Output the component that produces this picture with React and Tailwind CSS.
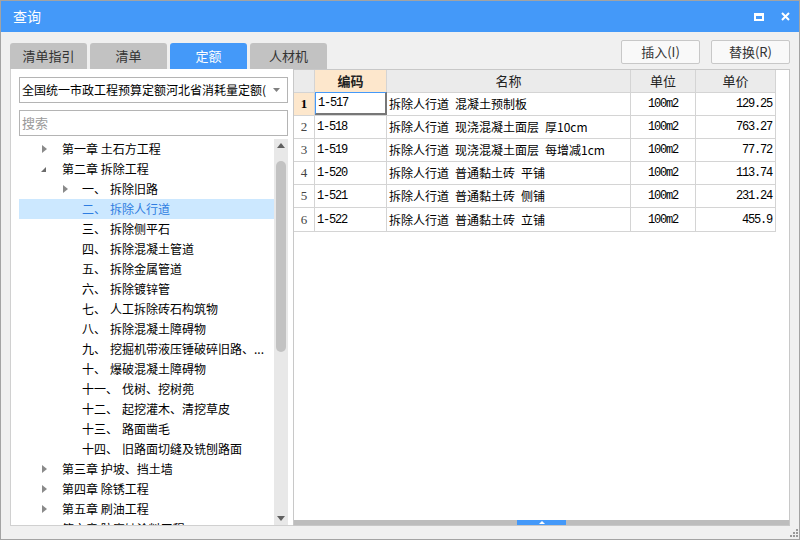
import React from "react";

const tree = [
  { lvl: 0, arrow: "right", label: "第一章 土石方工程" },
  { lvl: 0, arrow: "down", label: "第二章 拆除工程" },
  { lvl: 1, arrow: "right", num: "一、", label: "拆除旧路" },
  { lvl: 1, num: "二、", label: "拆除人行道", sel: true },
  { lvl: 1, num: "三、", label: "拆除侧平石" },
  { lvl: 1, num: "四、", label: "拆除混凝土管道" },
  { lvl: 1, num: "五、", label: "拆除金属管道" },
  { lvl: 1, num: "六、", label: "拆除镀锌管" },
  { lvl: 1, num: "七、", label: "人工拆除砖石构筑物" },
  { lvl: 1, num: "八、", label: "拆除混凝土障碍物" },
  { lvl: 1, num: "九、", label: "挖掘机带液压锤破碎旧路、..." },
  { lvl: 1, num: "十、", label: "爆破混凝土障碍物" },
  { lvl: 1, num: "十一、", label: "伐树、挖树蔸" },
  { lvl: 1, num: "十二、", label: "起挖灌木、清挖草皮" },
  { lvl: 1, num: "十三、", label: "路面凿毛" },
  { lvl: 1, num: "十四、", label: "旧路面切缝及铣刨路面" },
  { lvl: 0, arrow: "right", label: "第三章 护坡、挡土墙" },
  { lvl: 0, arrow: "right", label: "第四章 除锈工程" },
  { lvl: 0, arrow: "right", label: "第五章 刷油工程" },
  { lvl: 0, arrow: "right", label: "第六章 防腐蚀涂料工程" },
];

const rows = [
  { code: "1-517", name: "拆除人行道\u2002混凝土预制板", unit: "100m2", price: "129.25" },
  { code: "1-518", name: "拆除人行道\u2002现浇混凝土面层\u2002厚10cm", unit: "100m2", price: "763.27" },
  { code: "1-519", name: "拆除人行道\u2002现浇混凝土面层\u2002每增减1cm", unit: "100m2", price: "77.72" },
  { code: "1-520", name: "拆除人行道\u2002普通黏土砖\u2002平铺", unit: "100m2", price: "113.74" },
  { code: "1-521", name: "拆除人行道\u2002普通黏土砖\u2002侧铺", unit: "100m2", price: "231.24" },
  { code: "1-522", name: "拆除人行道\u2002普通黏土砖\u2002立铺", unit: "100m2", price: "455.9" },
];

const tabs = ["清单指引", "清单", "定额", "人材机"];

function Arrow({ dir }) {
  if (dir === "down") {
    return (
      <svg width="8" height="8" viewBox="0 0 8 8">
        <path d="M6 2 L6 7 L1 7 Z" fill="#6b6b6b" />
      </svg>
    );
  }
  return (
    <svg width="8" height="10" viewBox="0 0 8 10">
      <path d="M2 1 L7 5 L2 9 Z" fill="#8a8a8a" />
    </svg>
  );
}

const mono = "font-['Liberation_Mono','Noto_Sans_CJK_SC',monospace] tracking-[-1.2px]";

export default function App() {
  return (
    <div className="w-[800px] h-[540px] flex flex-col bg-[#f0f0f0] border border-[#a3a3a3] font-['Noto_Sans_CJK_SC','Noto_Sans',sans-serif] text-[12px] text-[#222] overflow-hidden">
      {/* title bar */}
      <div className="h-[31px] bg-[#4499f9] flex items-center justify-between pl-[12px] pr-[9px] shrink-0">
        <span className="text-white text-[14px]">查询</span>
        <div className="flex items-center gap-[17px]">
          <div className="w-[10px] h-[8px] border-2 border-t-[3px] border-white" />
          <svg width="9" height="9" viewBox="0 0 9 9">
            <path d="M1 1 L8 8 M8 1 L1 8" stroke="white" strokeWidth="2" />
          </svg>
        </div>
      </div>

      {/* tabs + buttons */}
      <div className="h-[37px] flex justify-between px-[9px] shrink-0">
        <div className="flex items-end gap-[3px]">
          {tabs.map((t) => (
            <div
              key={t}
              className={`w-[77px] h-[26px] rounded-t-[3px] flex items-center justify-center text-[13px] ${
                t === "定额" ? "bg-[#4499f9] text-white" : "bg-[#c2c2c2] text-[#333]"
              }`}
            >
              {t}
            </div>
          ))}
        </div>
        <div className="flex items-start gap-[11px] pt-[8px]">
          <button className="w-[79px] h-[24px] bg-[#f9f9f9] border border-[#c8c8c8] rounded-[2px] text-[13px] text-[#333]">
            插入(I)
          </button>
          <button className="w-[79px] h-[24px] bg-[#f9f9f9] border border-[#c8c8c8] rounded-[2px] text-[13px] text-[#333]">
            替换(R)
          </button>
        </div>
      </div>

      {/* main */}
      <div className="flex pl-[9px] pr-[9px] h-[457px] shrink-0">
        {/* left panel */}
        <div className="w-[283px] bg-white border-l border-b border-[#d0d0d0] flex flex-col pl-[8px] pr-[5px] pt-[8px]">
          <div className="h-[26px] border border-[#b4b4b4] flex items-center pl-[2px] pr-[7px] justify-between shrink-0">
            <span className="text-[12px] text-black whitespace-nowrap overflow-hidden">全国统一市政工程预算定额河北省消耗量定额(</span>
            <svg width="7" height="4" viewBox="0 0 7 4" className="shrink-0 ml-[6px]">
              <path d="M0 0 L7 0 L3.5 4 Z" fill="#808080" />
            </svg>
          </div>
          <div className="h-[26px] mt-[7px] border border-[#b4b4b4] flex items-center pl-[2px] shrink-0 text-[13px] text-[#9a9a9a]">
            搜索
          </div>
          <div className="flex flex-1 mt-[3px] min-h-0">
            <div className="flex-1 overflow-hidden">
              {tree.map((it, i) => (
                <div
                  key={i}
                  className={`h-[20px] flex items-center whitespace-nowrap text-[12px] ${
                    it.sel ? "bg-[#cce8ff] text-[#2f7de1]" : "text-black"
                  }`}
                >
                  {it.lvl === 0 ? (
                    <>
                      <div className="w-[43px] flex justify-end pr-[14px]">{it.arrow && <Arrow dir={it.arrow} />}</div>
                      <span>{it.label}</span>
                    </>
                  ) : (
                    <>
                      <div className="w-[63px] flex justify-end pr-[13px]">{it.arrow && <Arrow dir={it.arrow} />}</div>
                      <span>{it.num}</span>
                      <span className="ml-[4px]">{it.label}</span>
                    </>
                  )}
                </div>
              ))}
            </div>
            <div className="w-[14px] bg-[#e8e8e8] flex flex-col items-center">
              <svg width="8" height="5" viewBox="0 0 8 5" className="mt-[4px]">
                <path d="M0 5 L8 5 L4 0 Z" fill="#606060" />
              </svg>
              <div className="w-[10px] h-[191px] mt-[13px] bg-[#c2c2c2] rounded-[5px]" />
              <div className="flex-1" />
              <svg width="8" height="5" viewBox="0 0 8 5" className="mb-[4px]">
                <path d="M0 0 L8 0 L4 5 Z" fill="#606060" />
              </svg>
            </div>
          </div>
        </div>

        {/* right panel */}
        <div className="flex-1 bg-white border border-[#c8c8c8] flex flex-col">
          <div className="flex-1">
            <div className="w-[482px] border-r border-b border-[#d4d4d4]">
              <div className="flex h-[23px] bg-[#ebebeb] border-b border-[#d4d4d4] text-[13px] text-[#222]">
                <div className="w-[21px] border-r border-[#d4d4d4]" />
                <div className="w-[72px] border-r border-[#d4d4d4] bg-[#fde7cc] flex items-center justify-center font-bold">编码</div>
                <div className="w-[244px] border-r border-[#d4d4d4] flex items-center justify-center">名称</div>
                <div className="w-[65px] border-r border-[#d4d4d4] flex items-center justify-center">单位</div>
                <div className="flex-1 flex items-center justify-center">单价</div>
              </div>
              {rows.map((r, i) => (
                <div key={r.code} className={`flex h-[23px] text-black ${i < rows.length - 1 ? "border-b border-[#d4d4d4]" : ""}`}>
                  <div
                    className={`w-[21px] border-r border-[#d4d4d4] flex items-center justify-center font-['Liberation_Serif',serif] text-[13px] ${
                      i === 0 ? "bg-[#fde7cc] font-bold" : "text-[#444]"
                    }`}
                  >
                    {i + 1}
                  </div>
                  <div
                    className={`w-[72px] flex items-center pl-[2px] text-[12px] ${mono} ${
                      i === 0
                        ? "border-t border-l border-t-[#4499f9] border-l-[#4499f9] border-r-2 border-b-2 border-r-[#777] border-b-[#777] -mt-px"
                        : "border-r border-[#d4d4d4]"
                    }`}
                  >
                    {r.code}
                  </div>
                  <div className="w-[244px] border-r border-[#d4d4d4] flex items-center pl-[2px] text-[12px] whitespace-nowrap">
                    {r.name}
                  </div>
                  <div className={`w-[65px] border-r border-[#d4d4d4] flex items-center justify-center text-[12px] ${mono}`}>
                    {r.unit}
                  </div>
                  <div className={`flex-1 flex items-center justify-end pr-[3px] text-[12px] ${mono}`}>{r.price}</div>
                </div>
              ))}
            </div>
          </div>
          <div className="h-[5px] bg-[#bdbdbd] flex justify-center shrink-0">
            <div className="w-[49px] bg-[#4499f9] flex items-center justify-center">
              <svg width="6" height="3" viewBox="0 0 6 3">
                <path d="M0 3 L6 3 L3 0 Z" fill="white" />
              </svg>
            </div>
          </div>
        </div>
      </div>

      {/* status/resize */}
      <div className="flex-1 flex justify-end items-end pr-[1px] pb-[2px]">
        <svg width="8" height="8" viewBox="0 0 8 8">
          <rect x="6" y="0" width="2" height="2" fill="#9a9a9a" />
          <rect x="3" y="3" width="2" height="2" fill="#9a9a9a" />
          <rect x="6" y="3" width="2" height="2" fill="#9a9a9a" />
          <rect x="0" y="6" width="2" height="2" fill="#9a9a9a" />
          <rect x="3" y="6" width="2" height="2" fill="#9a9a9a" />
          <rect x="6" y="6" width="2" height="2" fill="#9a9a9a" />
        </svg>
      </div>
    </div>
  );
}
